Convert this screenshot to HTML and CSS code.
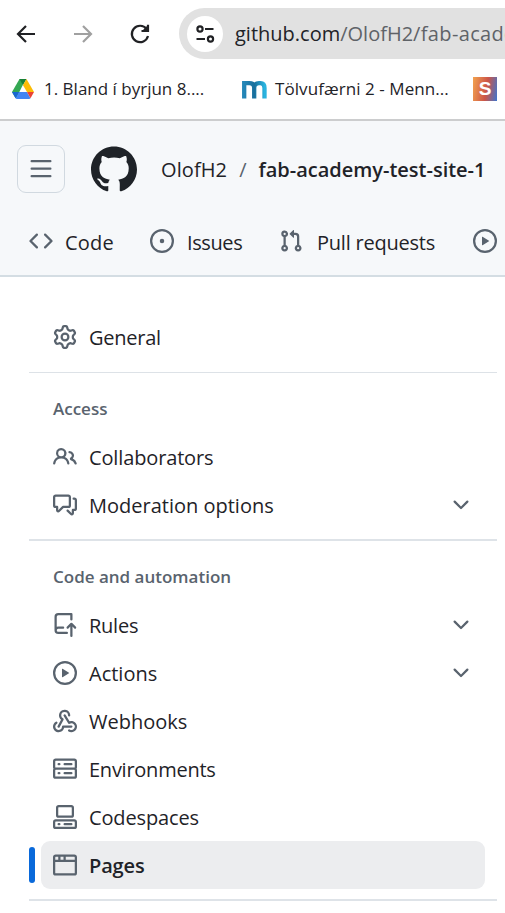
FILE: index.html
```html
<!DOCTYPE html>
<html lang="en">
<head>
<meta charset="utf-8">
<title>Pages</title>
<link rel="stylesheet" href="styles.css">
</head>
<body>
<div class="toolbar">
  <svg class="tool-icon" viewBox="0 0 24 24"><path class="line dark" d="M21 12H4M12 4L4 12L12 20"/></svg>
  <svg class="tool-icon" viewBox="0 0 24 24"><path class="line faded" d="M3 12H20M12 4L20 12L12 20"/></svg>
  <svg class="tool-icon" viewBox="0 0 24 24"><path class="line dark" d="M18.6 7A8.2 8.2 0 1 0 20 14M20 2.8V9H13.5"/><path d="M14 9L20 3V9Z" fill="#202124"/></svg>
  <div class="address">
    <span class="site-info"><svg width="20" height="20" viewBox="0 0 20 20"><g class="line dark"><circle cx="5" cy="5" r="2.6"/><path d="M10 5H18.5M1.500 15H10"/><circle cx="15.500" cy="15" r="2.600"/></g></svg></span>
    <span class="url">github.com<span class="path">/OlofH2</span><span class="path tail">/fab-acade</span></span>
  </div>
</div>
<div class="bookmarks">
  <div class="bookmark first">
    <svg width="22" height="22" viewBox="0 0 22 22"><path fill="#34a853" d="M7.500 1H11L10.800 7L4.800 19L3.500 20L0 14Z"/><path fill="#188038" d="M7.500 1H14.500L11 7.300Z"/><path fill="#fbbc04" d="M14.500 1L22 14H15L11 7.300Z"/><path fill="#4285f4" d="M7 14H15L18.500 20.200Q18 21 17 21H5Q4 21 3.500 20.200Z"/><path fill="#1967d2" d="M0 14H7L3.500 20.200Z"/><path fill="#ea4335" d="M15 14H22L18.500 20.200Z"/></svg>
    <span class="bm-one">1. Bland í byrjun 8....</span>
  </div>
  <div class="bookmark second">
    <svg width="25" height="19" viewBox="0 0 25 19"><defs><linearGradient id="wave"><stop offset="0" stop-color="#2486b7"/><stop offset=".5" stop-color="#196f9c"/><stop offset="1" stop-color="#29b3df"/></linearGradient></defs><path fill="none" stroke="url(#wave)" stroke-width="4.300" d="M2.200 18.500V3.200H7.500Q12.200 3.200 12.200 8V18.500V8Q12.200 3.200 17 3.200H18.500Q22.500 3.200 22.500 8V18.500"/></svg>
    <span class="bm-two">Tölvufærni 2 - Menn...</span>
  </div>
  <div class="s-tile">S</div>
</div>
<header class="site-header">
  <div class="crumbs">
    <div class="menu-button"><svg class="icon" viewBox="0 0 16 16"><path d="M1 2.750A.75.75 0 0 1 1.750 2h12.500a.75.75 0 0 1 0 1.500H1.750A.75.75 0 0 1 1 2.750Zm0 5A.75.75 0 0 1 1.750 7h12.500a.75.75 0 0 1 0 1.500H1.750A.75.75 0 0 1 1 7.750ZM1.750 12h12.500a.75.75 0 0 1 0 1.500H1.750a.75.75 0 0 1 0-1.500Z"/></svg></div>
    <svg class="mark" viewBox="0 0 24 24"><path d="M12.5.75C6.146.75 1 5.896 1 12.25c0 5.089 3.292 9.387 7.863 10.91.575.101.79-.244.79-.546 0-.273-.014-1.178-.014-2.142-2.889.532-3.636-.704-3.866-1.35-.13-.331-.69-1.352-1.18-1.625-.402-.216-.977-.748-.014-.762.906-.014 1.553.834 1.769 1.179 1.035 1.74 2.688 1.25 3.349.948.1-.747.402-1.25.733-1.538-2.559-.287-5.232-1.279-5.232-5.678 0-1.25.445-2.285 1.178-3.09-.115-.288-.517-1.467.115-3.048 0 0 .963-.302 3.163 1.179.92-.259 1.897-.388 2.875-.388.977 0 1.955.13 2.875.388 2.2-1.495 3.162-1.179 3.162-1.179.633 1.581.23 2.76.115 3.048.733.805 1.179 1.825 1.179 3.09 0 4.413-2.688 5.39-5.247 5.678.417.36.776 1.05.776 2.128 0 1.538-.014 2.774-.014 3.162 0 .302.216.662.79.547C20.709 21.637 24 17.324 24 12.25 24 5.896 18.854.75 12.5.75Z"/></svg>
    <span class="owner">OlofH2</span><span class="slash">/</span><span class="repo">fab-academy-test-site-1</span>
  </div>
  <nav class="tabs">
    <div class="tab tab-code"><svg class="icon" viewBox="0 0 16 16"><path d="m11.28 3.22 4.25 4.25a.75.75 0 0 1 0 1.06l-4.25 4.25a.749.749 0 0 1-1.275-.326.749.749 0 0 1 .215-.734L13.94 8l-3.72-3.72a.749.749 0 0 1 .326-1.275.749.749 0 0 1 .734.215Zm-6.56 0a.751.751 0 0 1 1.042.018.751.751 0 0 1 .018 1.042L2.06 8l3.72 3.72a.749.749 0 0 1-.326 1.275.749.749 0 0 1-.734-.215L.47 8.53a.75.75 0 0 1 0-1.06Z"/></svg><span>Code</span></div>
    <div class="tab tab-issues"><svg class="icon" viewBox="0 0 16 16"><path d="M8 9.5a1.5 1.5 0 1 0 0-3 1.5 1.5 0 0 0 0 3Z"/><path d="M8 0a8 8 0 1 1 0 16A8 8 0 0 1 8 0ZM1.5 8a6.5 6.5 0 1 0 13 0 6.5 6.5 0 0 0-13 0Z"/></svg><span>Issues</span></div>
    <div class="tab tab-pulls"><svg class="icon" viewBox="0 0 16 16"><path d="M1.5 3.25a2.25 2.25 0 1 1 3 2.122v5.256a2.251 2.251 0 1 1-1.5 0V5.372A2.25 2.25 0 0 1 1.5 3.25Zm5.677-.177L9.573.677A.25.25 0 0 1 10 .854V2.5h1A2.5 2.5 0 0 1 13.5 5v5.628a2.251 2.251 0 1 1-1.5 0V5a1 1 0 0 0-1-1h-1v1.646a.25.25 0 0 1-.427.177L7.177 3.427a.25.25 0 0 1 0-.354ZM3.75 2.5a.75.75 0 1 0 0 1.5.75.75 0 0 0 0-1.5Zm0 9.5a.75.75 0 1 0 0 1.5.75.75 0 0 0 0-1.5Zm8.25.75a.75.75 0 1 0 1.5 0 .75.75 0 0 0-1.5 0Z"/></svg><span>Pull requests</span></div>
    <svg class="icon" viewBox="0 0 16 16"><path d="M8 0a8 8 0 1 1 0 16A8 8 0 0 1 8 0ZM1.5 8a6.5 6.5 0 1 0 13 0 6.5 6.5 0 0 0-13 0Zm4.879-2.773 4.264 2.559a.25.25 0 0 1 0 .428l-4.264 2.559A.25.25 0 0 1 6 10.559V5.442a.25.25 0 0 1 .379-.215Z"/></svg>
  </nav>
</header>
<main class="settings">
  <div class="group">
    <div class="item"><svg class="icon" viewBox="0 0 16 16"><path d="M8 0a8.2 8.2 0 0 1 .701.031C9.444.095 9.99.645 10.16 1.29l.288 1.107c.018.066.079.158.212.224.231.114.454.243.668.386.123.082.233.09.299.071l1.103-.303c.644-.176 1.392.021 1.82.63.27.385.506.792.704 1.218.315.675.111 1.422-.364 1.891l-.814.806c-.049.048-.098.147-.088.294.016.257.016.515 0 .772-.01.147.038.246.088.294l.814.806c.475.469.679 1.216.364 1.891a7.977 7.977 0 0 1-.704 1.217c-.428.61-1.176.807-1.82.63l-1.102-.302c-.067-.019-.177-.011-.3.071a5.909 5.909 0 0 1-.668.386c-.133.066-.194.158-.211.224l-.29 1.106c-.168.646-.715 1.196-1.458 1.26a8.006 8.006 0 0 1-1.402 0c-.743-.064-1.289-.614-1.458-1.26l-.289-1.106c-.018-.066-.079-.158-.212-.224a5.738 5.738 0 0 1-.668-.386c-.123-.082-.233-.09-.299-.071l-1.103.303c-.644.176-1.392-.021-1.82-.63a8.12 8.12 0 0 1-.704-1.218c-.315-.675-.111-1.422.363-1.891l.815-.806c.05-.048.098-.147.088-.294a6.214 6.214 0 0 1 0-.772c.01-.147-.038-.246-.088-.294l-.815-.806C.635 6.045.431 5.298.746 4.623a7.92 7.92 0 0 1 .704-1.217c.428-.61 1.176-.807 1.82-.63l1.102.302c.067.019.177.011.3-.071.214-.143.437-.272.668-.386.133-.066.194-.158.211-.224l.29-1.106C6.009.645 6.556.095 7.299.03 7.53.01 7.764 0 8 0Zm-.571 1.525c-.036.003-.108.036-.137.146l-.289 1.105c-.147.561-.549.967-.998 1.189-.173.086-.34.183-.5.29-.417.278-.97.423-1.529.27l-1.103-.303c-.109-.03-.175.016-.195.045-.22.312-.412.644-.573.99-.014.031-.021.11.059.19l.815.806c.411.406.562.957.53 1.456a4.709 4.709 0 0 0 0 .582c.032.499-.119 1.05-.53 1.456l-.815.806c-.081.08-.073.159-.059.19.162.346.353.677.573.989.02.03.085.076.195.046l1.102-.303c.56-.153 1.113-.008 1.53.27.161.107.328.204.501.29.447.222.85.629.997 1.189l.289 1.105c.029.109.101.143.137.146a6.6 6.6 0 0 0 1.142 0c.036-.003.108-.036.137-.146l.289-1.105c.147-.561.549-.967.998-1.189.173-.086.34-.183.5-.29.417-.278.97-.423 1.529-.27l1.103.303c.109.029.175-.016.195-.045.22-.313.411-.644.573-.99.014-.031.021-.11-.059-.19l-.815-.806c-.411-.406-.562-.957-.53-1.456a4.709 4.709 0 0 0 0-.582c-.032-.499.119-1.05.53-1.456l.815-.806c.081-.08.073-.159.059-.19a6.464 6.464 0 0 0-.573-.989c-.02-.03-.085-.076-.195-.046l-1.102.303c-.56.153-1.113.008-1.53-.27a4.44 4.44 0 0 0-.501-.29c-.447-.222-.85-.629-.997-1.189l-.289-1.105c-.029-.11-.101-.143-.137-.146a6.6 6.6 0 0 0-1.142 0ZM11 8a3 3 0 1 1-6 0 3 3 0 0 1 6 0ZM9.5 8a1.5 1.5 0 1 0-3.001.001A1.5 1.5 0 0 0 9.5 8Z"/></svg><span class="label tight">General</span></div>
  </div>
  <div class="group thin">
    <h3>Access</h3>
    <div class="item"><svg class="icon" viewBox="0 0 16 16"><path d="M2 5.5a3.5 3.5 0 1 1 5.898 2.549 5.508 5.508 0 0 1 3.034 4.084.75.75 0 1 1-1.482.235 4 4 0 0 0-7.9 0 .75.75 0 0 1-1.482-.236A5.507 5.507 0 0 1 3.102 8.05 3.493 3.493 0 0 1 2 5.5ZM11 4a3.001 3.001 0 0 1 2.22 5.018 5.01 5.01 0 0 1 2.56 3.012.749.749 0 0 1-.885.954.752.752 0 0 1-.549-.514 3.507 3.507 0 0 0-2.522-2.372.75.75 0 0 1-.574-.73v-.352a.75.75 0 0 1 .416-.672A1.5 1.5 0 0 0 11 5.5.75.75 0 0 1 11 4Zm-5.5-.5a2 2 0 1 0-.001 3.999A2 2 0 0 0 5.5 3.5Z"/></svg><span class="label snug">Collaborators</span></div>
    <div class="item"><svg class="icon" viewBox="0 0 16 16"><path d="M1.75 1h8.5c.966 0 1.75.784 1.75 1.75v5.5A1.75 1.75 0 0 1 10.25 10H7.061l-2.574 2.573A1.458 1.458 0 0 1 2 11.543V10h-.25A1.75 1.75 0 0 1 0 8.25v-5.5C0 1.784.784 1 1.75 1ZM1.5 2.75v5.5c0 .138.112.25.25.25h1a.75.75 0 0 1 .75.75v2.19l2.72-2.72a.749.749 0 0 1 .53-.22h3.5a.25.25 0 0 0 .25-.25v-5.5a.25.25 0 0 0-.25-.25h-8.5a.25.25 0 0 0-.25.25Zm13 2a.25.25 0 0 0-.25-.25h-.5a.75.75 0 0 1 0-1.5h.5c.966 0 1.75.784 1.75 1.75v5.5A1.75 1.75 0 0 1 14.25 12H14v1.543a1.458 1.458 0 0 1-2.487 1.03L9.22 12.28a.749.749 0 0 1 .326-1.275.749.749 0 0 1 .734.215l2.22 2.22v-2.19a.75.75 0 0 1 .75-.75h1a.25.25 0 0 0 .25-.25Z"/></svg><span class="label">Moderation options</span><svg class="icon chevron" viewBox="0 0 16 16"><path d="M12.78 5.22a.749.749 0 0 1 0 1.06l-4.25 4.25a.749.749 0 0 1-1.06 0L3.22 6.28a.749.749 0 1 1 1.06-1.06L8 8.939l3.72-3.719a.749.749 0 0 1 1.06 0Z"/></svg></div>
  </div>
  <div class="group thick">
    <h3 class="wide">Code and automation</h3>
    <div class="item"><svg class="icon" viewBox="0 0 16 16"><path d="M1 2.5A2.5 2.5 0 0 1 3.5 0h8.75a.75.75 0 0 1 .75.75v3.5a.75.75 0 0 1-1.5 0V1.5h-8a1 1 0 0 0-1 1v6.708A2.493 2.493 0 0 1 3.5 9h3.25a.75.75 0 0 1 0 1.5H3.5a1 1 0 0 0 0 2h5.75a.75.75 0 0 1 0 1.5H3.5A2.5 2.5 0 0 1 1 11.5Zm13.23 7.79h-.001l-1.224-1.224v6.184a.75.75 0 0 1-1.5 0V9.066L10.28 10.29a.75.75 0 0 1-1.06-1.061l2.505-2.504a.75.75 0 0 1 1.06 0L15.29 9.23a.751.751 0 0 1-.018 1.042.751.751 0 0 1-1.042.018Z"/></svg><span class="label tight">Rules</span><svg class="icon chevron" viewBox="0 0 16 16"><path d="M12.78 5.22a.749.749 0 0 1 0 1.06l-4.25 4.25a.749.749 0 0 1-1.06 0L3.22 6.28a.749.749 0 1 1 1.06-1.06L8 8.939l3.72-3.719a.749.749 0 0 1 1.06 0Z"/></svg></div>
    <div class="item"><svg class="icon" viewBox="0 0 16 16"><path d="M8 0a8 8 0 1 1 0 16A8 8 0 0 1 8 0ZM1.5 8a6.5 6.5 0 1 0 13 0 6.5 6.5 0 0 0-13 0Zm4.879-2.773 4.264 2.559a.25.25 0 0 1 0 .428l-4.264 2.559A.25.25 0 0 1 6 10.559V5.442a.25.25 0 0 1 .379-.215Z"/></svg><span class="label">Actions</span><svg class="icon chevron" viewBox="0 0 16 16"><path d="M12.78 5.22a.749.749 0 0 1 0 1.06l-4.25 4.25a.749.749 0 0 1-1.06 0L3.22 6.28a.749.749 0 1 1 1.06-1.06L8 8.939l3.72-3.719a.749.749 0 0 1 1.06 0Z"/></svg></div>
    <div class="item"><svg class="icon" viewBox="0 0 16 16"><path d="M5.5 4.25a2.25 2.25 0 0 1 4.5 0 .75.75 0 0 0 1.5 0 3.75 3.75 0 1 0-6.14 2.889l-2.272 4.258a.75.75 0 0 0 1.324.706L7 7.25a.75.75 0 0 0-.309-1.015A2.25 2.25 0 0 1 5.5 4.25Z"/><path d="M7.364 3.607a.75.75 0 0 1 1.03.257l2.608 4.349a3.75 3.75 0 1 1-.628 6.785.75.75 0 0 1 .752-1.299 2.25 2.25 0 1 0-.033-3.88.75.75 0 0 1-1.03-.256L7.107 4.636a.75.75 0 0 1 .257-1.03Z"/><path d="M2.9 8.776A.75.75 0 0 1 2.625 9.8 2.25 2.25 0 1 0 6 11.75a.75.75 0 0 1 .75-.751h5.5a.75.75 0 0 1 0 1.5H7.425a3.751 3.751 0 1 1-5.55-3.998.75.75 0 0 1 1.024.274Z"/></svg><span class="label">Webhooks</span></div>
    <div class="item"><svg class="icon" viewBox="0 0 16 16"><path d="M1.75 1h12.5c.966 0 1.75.784 1.75 1.75v4c0 .372-.116.717-.314 1 .198.283.314.628.314 1v4a1.75 1.75 0 0 1-1.75 1.75H1.75A1.75 1.75 0 0 1 0 12.75v-4c0-.358.109-.707.314-1a1.739 1.739 0 0 1-.314-1v-4C0 1.784.784 1 1.75 1ZM1.5 2.75v4c0 .138.112.25.25.25h12.5a.25.25 0 0 0 .25-.25v-4a.25.25 0 0 0-.25-.25H1.75a.25.25 0 0 0-.25.25Zm.25 5.75a.25.25 0 0 0-.25.25v4c0 .138.112.25.25.25h12.5a.25.25 0 0 0 .25-.25v-4a.25.25 0 0 0-.25-.25ZM7 4.75A.75.75 0 0 1 7.75 4h4.5a.75.75 0 0 1 0 1.5h-4.5A.75.75 0 0 1 7 4.75ZM7.75 10h4.5a.75.75 0 0 1 0 1.5h-4.5a.75.75 0 0 1 0-1.5ZM3 4.75A.75.75 0 0 1 3.75 4h.5a.75.75 0 0 1 0 1.5h-.5A.75.75 0 0 1 3 4.75ZM3.75 10h.5a.75.75 0 0 1 0 1.5h-.5a.75.75 0 0 1 0-1.5Z"/></svg><span class="label tight">Environments</span></div>
    <div class="item"><svg class="icon" viewBox="0 0 16 16"><path d="M0 11.25c0-.966.784-1.75 1.75-1.75h12.5c.966 0 1.75.784 1.75 1.75v3A1.75 1.75 0 0 1 14.25 16H1.75A1.75 1.75 0 0 1 0 14.25Zm2-9.5C2 .784 2.784 0 3.75 0h8.5C13.216 0 14 .784 14 1.75v5a1.75 1.75 0 0 1-1.75 1.75h-8.5A1.75 1.75 0 0 1 2 6.75Zm1.75-.25a.25.25 0 0 0-.25.25v5c0 .138.112.25.25.25h8.5a.25.25 0 0 0 .25-.25v-5a.25.25 0 0 0-.25-.25Zm-2 9.5a.25.25 0 0 0-.25.25v3c0 .138.112.25.25.25h12.5a.25.25 0 0 0 .25-.25v-3a.25.25 0 0 0-.25-.25Z"/><path d="M7 12.75a.75.75 0 0 1 .75-.75h4.5a.75.75 0 0 1 0 1.5h-4.5a.75.75 0 0 1-.75-.75Zm-4 0a.75.75 0 0 1 .75-.75h.5a.75.75 0 0 1 0 1.5h-.5a.75.75 0 0 1-.75-.75Z"/></svg><span class="label snug">Codespaces</span></div>
    <div class="item selected"><svg class="icon" viewBox="0 0 16 16"><path d="M0 2.75C0 1.784.784 1 1.75 1h12.5c.966 0 1.75.784 1.75 1.75v10.5A1.75 1.75 0 0 1 14.25 15H1.75A1.75 1.75 0 0 1 0 13.25ZM14.5 6h-13v7.25c0 .138.112.25.25.25h12.5a.25.25 0 0 0 .25-.25Zm-6-3.5v2h6V2.75a.25.25 0 0 0-.25-.25ZM5 2.5v2h2v-2Zm-3.25 0a.25.25 0 0 0-.25.25V4.5h2v-2Z"/></svg><span class="label snug">Pages</span></div>
  </div>
  <div class="group thick"></div>
</main>
</body>
</html>
```
FILE: styles.css
```css
* { box-sizing: border-box; }
html, body { height: 100%; }
body {
  margin: 0;
  overflow: hidden;
  background: #fff;
  color: #1f2328;
  font-family: "Open Sans", "Noto Sans", sans-serif;
  font-size: 20px;
  line-height: 30px;
  white-space: nowrap;
}
svg { display: block; flex: none; }
.icon { width: 24px; height: 24px; fill: #59636e; }
.line { fill: none; stroke-width: 2.2; }
.dark { stroke: #202124; }
.faded { stroke: #a0a0a0; }

/* Browser chrome */
.toolbar { display: flex; align-items: center; height: 67px; padding-left: 14px; }
.tool-icon { width: 24px; height: 24px; margin-right: 33px; }
.tool-icon:nth-child(3) { margin-right: 27px; }
.address {
  display: flex;
  flex: 1;
  align-items: center;
  gap: 12px;
  height: 51px;
  min-width: 0;
  padding-left: 8px;
  overflow: hidden;
  border-radius: 26px 0 0 26px;
  background: #e1e1e1;
}
.site-info {
  display: flex;
  flex: none;
  align-items: center;
  justify-content: center;
  width: 36px;
  height: 36px;
  border-radius: 50%;
  background: #fff;
}
.path { color: #5f6368; }
.tail { letter-spacing: 0.35px; }
.bookmarks {
  display: flex;
  align-items: center;
  height: 52px;
  padding: 0 0 8px 12px;
  font-size: 17px;
}
.bookmark { display: flex; align-items: center; }
.first { gap: 10px; width: 230px; }
.second { gap: 8px; width: 231px; }
.bm-two { letter-spacing: 0.07px; }
.s-tile {
  width: 24px;
  height: 24px;
  background: linear-gradient(100deg, #f3a24e, #cc5548 55%, #3d76cf);
  color: #fff;
  font: bold 19px/24px "Liberation Sans", sans-serif;
  text-align: center;
}

/* Repository header */
.site-header {
  height: 158px;
  border-top: 2px solid #cccdce;
  border-bottom: 2px solid #d4dde3;
  background: #f6f8fa;
}
.crumbs { display: flex; align-items: center; height: 96px; padding-left: 17px; }
.crumbs > span { padding-top: 2px; }
.menu-button {
  display: flex;
  align-items: center;
  justify-content: center;
  width: 48px;
  height: 48px;
  border: 1px solid #d1d9e0;
  border-radius: 9px;
}
.mark { width: 48px; height: 48px; margin: 0 24px; fill: #1f2328; }
.owner { letter-spacing: 0.1px; }
.slash { margin: 0 12px; color: #59636e; }
.repo { font-weight: 600; letter-spacing: -0.01px; }
.tabs { display: flex; align-items: center; height: 48px; padding-left: 29px; }
.tab { display: flex; align-items: center; gap: 12px; }
.tab span { padding-top: 3px; }
.tab-code { width: 121px; letter-spacing: 0.2px; }
.tab-issues { width: 129px; gap: 13px; letter-spacing: -0.4px; }
.tab-pulls { width: 194px; gap: 14px; letter-spacing: -0.23px; }

/* Settings navigation */
.settings { padding: 36px 8px 0 29px; }
.group { padding-bottom: 10px; }
.thin { padding-top: 24px; border-top: 1px solid #dde2e7; margin-top: 1px; }
.thick { padding-top: 24px; border-top: 2px solid #dee3e8; }
h3 {
  height: 24px;
  margin: 0 0 12px 24px;
  color: #59636e;
  font-size: 17px;
  font-weight: 600;
  line-height: 24px;
}
.item {
  position: relative;
  display: flex;
  align-items: center;
  gap: 12px;
  height: 48px;
  margin: 0 12px;
  padding: 0 12px;
  border-radius: 9px;
}
.label { padding-top: 2px; }
.tight { letter-spacing: -0.25px; }
.snug { letter-spacing: -0.14px; }
.chevron { margin-left: auto; }
.selected { background: #ecedef; font-weight: 600; }
.selected::before {
  content: "";
  position: absolute;
  top: 6px;
  left: -12px;
  width: 6px;
  height: 36px;
  border-radius: 9px;
  background: #0969da;
}
```
